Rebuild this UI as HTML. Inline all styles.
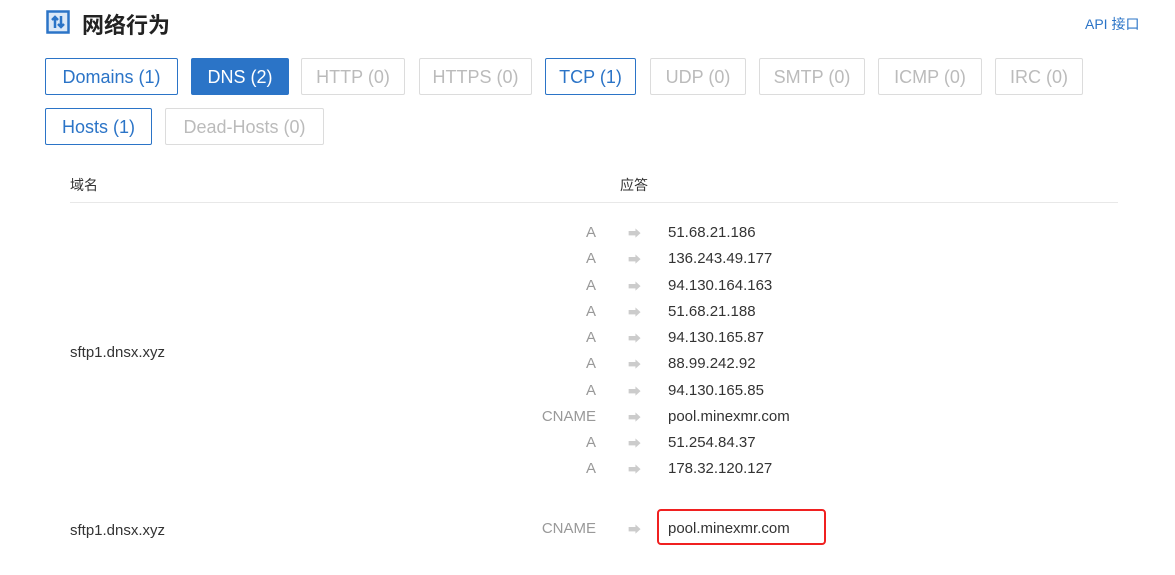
<!DOCTYPE html>
<html><head><meta charset="utf-8"><style>
*{margin:0;padding:0;box-sizing:border-box}
body{width:1175px;height:575px;background:#fff;position:relative;overflow:hidden;font-family:"Liberation Sans","Noto Sans CJK SC",sans-serif;}
.a{position:absolute;white-space:nowrap}
.b{position:absolute;height:37px;border:1px solid #dcdcdc;border-radius:2px;color:#bbb;font-size:18px;line-height:37px;text-align:center}
.on{border-color:#2b74c7;color:#2b74c7}
.sel{background:#2b74c7;border-color:#2b74c7;color:#fff}
.t{position:absolute;width:80px;left:516px;text-align:right;color:#999;font-size:15px}
.r{position:absolute;left:628px;color:#ccc;font-size:13px}
.v{position:absolute;left:668px;color:#333;font-size:15px}
</style></head><body>
<svg class="a" style="left:46px;top:10px" width="24" height="24" viewBox="0 0 24 24"><rect x="1.5" y="1.5" width="21" height="21" fill="#dbe8f7" stroke="#2b74c7" stroke-width="2.5"/><path d="M9 18V7M6 10l3-3 3 3" stroke="#2b74c7" stroke-width="2.5" fill="none"/><path d="M15 6v11M12 14l3 3 3-3" stroke="#2b74c7" stroke-width="2.5" fill="none"/></svg>
<div class="a" style="left:82px;top:8px;font-size:22px;font-weight:bold;color:#222">网络行为</div>
<div class="a" style="left:1085px;top:14px;font-size:14px;color:#2b74c7">API 接口</div>
<div class="b on" style="left:45px;top:58px;width:133px">Domains (1)</div>
<div class="b sel" style="left:191px;top:58px;width:98px">DNS (2)</div>
<div class="b" style="left:301px;top:58px;width:104px">HTTP (0)</div>
<div class="b" style="left:419px;top:58px;width:113px">HTTPS (0)</div>
<div class="b on" style="left:545px;top:58px;width:91px">TCP (1)</div>
<div class="b" style="left:650px;top:58px;width:96px">UDP (0)</div>
<div class="b" style="left:759px;top:58px;width:106px">SMTP (0)</div>
<div class="b" style="left:878px;top:58px;width:104px">ICMP (0)</div>
<div class="b" style="left:995px;top:58px;width:88px">IRC (0)</div>
<div class="b on" style="left:45px;top:108px;width:107px">Hosts (1)</div>
<div class="b" style="left:165px;top:108px;width:159px">Dead-Hosts (0)</div>
<div class="a" style="left:70px;top:175px;font-size:14px;color:#333">域名</div>
<div class="a" style="left:620px;top:175px;font-size:14px;color:#333">应答</div>
<div class="a" style="left:70px;top:202px;width:1048px;height:1px;background:#e8e8e8"></div>
<div class="a" style="left:70px;top:344px;font-size:15px;color:#333">sftp1.dnsx.xyz</div>
<div class="a" style="left:70px;top:522px;font-size:15px;color:#333">sftp1.dnsx.xyz</div>
<div class="t" style="top:224px">A</div><div class="r" style="top:223px">➡</div><div class="v" style="top:224px">51.68.21.186</div>
<div class="t" style="top:250px">A</div><div class="r" style="top:249px">➡</div><div class="v" style="top:250px">136.243.49.177</div>
<div class="t" style="top:277px">A</div><div class="r" style="top:276px">➡</div><div class="v" style="top:277px">94.130.164.163</div>
<div class="t" style="top:303px">A</div><div class="r" style="top:302px">➡</div><div class="v" style="top:303px">51.68.21.188</div>
<div class="t" style="top:329px">A</div><div class="r" style="top:328px">➡</div><div class="v" style="top:329px">94.130.165.87</div>
<div class="t" style="top:355px">A</div><div class="r" style="top:354px">➡</div><div class="v" style="top:355px">88.99.242.92</div>
<div class="t" style="top:382px">A</div><div class="r" style="top:381px">➡</div><div class="v" style="top:382px">94.130.165.85</div>
<div class="t" style="top:408px">CNAME</div><div class="r" style="top:407px">➡</div><div class="v" style="top:408px">pool.minexmr.com</div>
<div class="t" style="top:434px">A</div><div class="r" style="top:433px">➡</div><div class="v" style="top:434px">51.254.84.37</div>
<div class="t" style="top:460px">A</div><div class="r" style="top:459px">➡</div><div class="v" style="top:460px">178.32.120.127</div>
<div class="t" style="top:520px">CNAME</div><div class="r" style="top:519px">➡</div><div class="v" style="top:520px">pool.minexmr.com</div>
<div class="a" style="left:657px;top:509px;width:169px;height:36px;border:2px solid #f02020;border-radius:4px"></div>
</body></html>
